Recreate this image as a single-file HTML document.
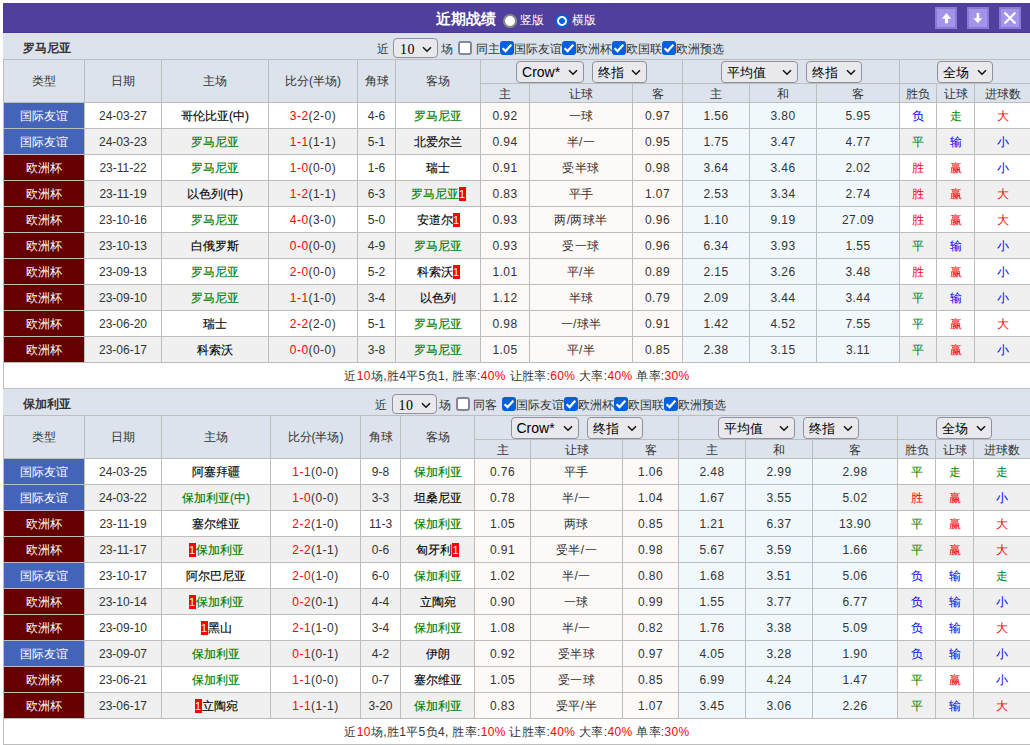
<!DOCTYPE html><html><head><meta charset="utf-8"><style>
*{box-sizing:border-box}
body{margin:0;width:1030px;height:745px;overflow:hidden;position:relative;background:#fff;font-family:"Liberation Sans",sans-serif;font-size:12px;color:#333}
.bar{position:absolute;left:3px;top:3px;width:1027px;height:30px;background:#503f9c;border-bottom:1px solid #4a399b}
.bar .title{position:absolute;left:433px;top:7px;color:#fff;font-weight:bold;font-size:15px;line-height:18px}
.rad{position:absolute;top:11px;width:14px;height:14px;border-radius:50%}
.rad.off{background:#fff;border:2px solid #8a8a8a}
.rad.on{background:radial-gradient(circle,#0060df 0,#0060df 2.6px,#fff 3.2px);border:2px solid #0060df}
.rl{position:absolute;top:9px;color:#fff;font-size:12px;line-height:16px}
.btn{position:absolute;top:4px;width:22px;height:22px;background:#a493e8;box-shadow:inset 0 0 0 2px #8c7bd6}
.btn svg{display:block}
.tb{position:absolute;left:3px;width:1027px;height:26px;background:#dce3ec}
.ttl{position:absolute;left:20px;top:8px;font-size:12px;line-height:14px;color:#333}
.ti{position:absolute;top:8px;line-height:16px;white-space:nowrap}
.ab{position:absolute;line-height:0}
.sel{display:inline-block;position:relative;vertical-align:top;height:22px;border:1px solid #8f8f9d;border-radius:4px;background:#e9e9ed;color:#000;font-size:13px;line-height:21px;padding-left:5px;text-align:left}
.lat{font-size:14px}
.mono{font-family:"Liberation Serif",serif;font-size:14px;margin-left:1px;letter-spacing:.5px;position:relative;top:1.5px}
.sel .chev{position:absolute;right:5px;top:7px}
.s10{height:20px;line-height:18px}
.cb{display:inline-block;vertical-align:top;width:14px;height:14px;border:2px solid #86869a;border-radius:3px;background:#fff}
.cb.on{background:#0060df;border:none;border-radius:3px}
.cb svg{display:block}
.t{position:absolute;left:3px;border-collapse:collapse;table-layout:fixed;width:1027px}
.t td,.t th{border:1px solid #bdbdbd;padding:0;text-align:center;white-space:nowrap;overflow:hidden;font-weight:normal}
.t th{background:#dce3ec;color:#333}
.h1 th{height:24px}
.h1 th.hs{vertical-align:top;padding-top:1px}
.h2 th{height:19px;padding-top:3px;line-height:14px;vertical-align:top}
.hs .sel{margin:0 4px}
.t td{height:26px;background:#fff;padding-top:1px}
.t tr.alt td{background:#f0f0f0}
.t tr td.od{background:#fdf9f6;letter-spacing:.4px}
.t tr td.av{background:#f1f8fb;letter-spacing:.4px}
.t tr td.ty1{background:#4464b9;color:#fff}
.t tr td.ty2{background:#660000;color:#fff}
.tg{color:#008000;-webkit-text-stroke:.15px #008000}
.tk{color:#000;-webkit-text-stroke:.12px #000}
.sr{color:#f00}
.t td.sc{letter-spacing:.45px}
.t td.xr{color:#f00}.t td.xg{color:#008000}.t td.xb{color:#00f}
.rc{display:inline-block;font-style:normal;background:#f00;color:#fff;width:7px;height:14px;line-height:14px;font-size:11px;vertical-align:middle}
.sum td{background:#fff;letter-spacing:.35px}
.red{color:#f00}
</style></head><body><div class="bar"><span class="title">近期战绩</span><span class="rad off" style="left:500px"></span><span class="rl" style="left:517px">竖版</span><span class="rad on" style="left:551.5px"></span><span class="rl" style="left:569px">横版</span><span class="btn" style="left:932px"><svg width="22" height="22" viewBox="0 0 22 22"><path d="M6.8 11.8L11.5 6L16.2 11.8H13.1V16.2H9.9V11.8Z" fill="#fff"/></svg></span><span class="btn" style="left:964px"><svg width="22" height="22" viewBox="0 0 22 22"><path d="M9.6 6H12.2V11.3H15.2L10.9 16.2L6.2 11.3H9.6Z" fill="#fff"/></svg></span><span class="btn" style="left:996px"><svg width="22" height="22" viewBox="0 0 22 22"><path d="M5.5 5.5L16.4 16.6M16.4 5.5L5.5 16.6" stroke="#fff" stroke-width="2.1"/></svg></span></div><div class="tb" style="top:33px"><b class="ttl">罗马尼亚</b><span class="ti" style="left:373.5px">近</span><span class="ab" style="left:390px;top:5px"><span class="sel s10" style="width:45px"><span class="mono">10</span><svg class="chev" width="10" height="7" viewBox="0 0 10 7"><path d="M1 1.2L5 5.2L9 1.2" fill="none" stroke="#111" stroke-width="1.5"/></svg></span></span><span class="ti" style="left:438px">场</span><span class="ab" style="left:455px;top:8px"><span class="cb"></span></span><span class="ti" style="left:472.5px">同主</span><span class="ab" style="left:497px;top:8px"><span class="cb on"><svg width="14" height="14" viewBox="0 0 14 14"><path d="M2.6 7.2L5.6 10.1L11.3 3.8" fill="none" stroke="#fff" stroke-width="2.2"/></svg></span></span><span class="ti" style="left:510.5px">国际友谊</span><span class="ab" style="left:559px;top:8px"><span class="cb on"><svg width="14" height="14" viewBox="0 0 14 14"><path d="M2.6 7.2L5.6 10.1L11.3 3.8" fill="none" stroke="#fff" stroke-width="2.2"/></svg></span></span><span class="ti" style="left:573px">欧洲杯</span><span class="ab" style="left:609px;top:8px"><span class="cb on"><svg width="14" height="14" viewBox="0 0 14 14"><path d="M2.6 7.2L5.6 10.1L11.3 3.8" fill="none" stroke="#fff" stroke-width="2.2"/></svg></span></span><span class="ti" style="left:623px">欧国联</span><span class="ab" style="left:659px;top:8px"><span class="cb on"><svg width="14" height="14" viewBox="0 0 14 14"><path d="M2.6 7.2L5.6 10.1L11.3 3.8" fill="none" stroke="#fff" stroke-width="2.2"/></svg></span></span><span class="ti" style="left:673px">欧洲预选</span></div><table class="t" style="top:59px"><col style="width:81px"><col style="width:77px"><col style="width:107px"><col style="width:89px"><col style="width:38px"><col style="width:85px"><col style="width:49px"><col style="width:103px"><col style="width:50px"><col style="width:67px"><col style="width:67px"><col style="width:83px"><col style="width:37px"><col style="width:38px"><col style="width:56px"><tr class="h1"><th rowspan="2">类型</th><th rowspan="2">日期</th><th rowspan="2">主场</th><th rowspan="2">比分(半场)</th><th rowspan="2">角球</th><th rowspan="2">客场</th><th colspan="3" class="hs"><span class="sel " style="width:68px"><span class="lat">Crow*</span><svg class="chev" width="10" height="7" viewBox="0 0 10 7"><path d="M1 1.2L5 5.2L9 1.2" fill="none" stroke="#111" stroke-width="1.5"/></svg></span><span class="sel " style="width:55px">终指<svg class="chev" width="10" height="7" viewBox="0 0 10 7"><path d="M1 1.2L5 5.2L9 1.2" fill="none" stroke="#111" stroke-width="1.5"/></svg></span></th><th colspan="3" class="hs"><span class="sel " style="width:77px">平均值<svg class="chev" width="10" height="7" viewBox="0 0 10 7"><path d="M1 1.2L5 5.2L9 1.2" fill="none" stroke="#111" stroke-width="1.5"/></svg></span><span class="sel " style="width:56px">终指<svg class="chev" width="10" height="7" viewBox="0 0 10 7"><path d="M1 1.2L5 5.2L9 1.2" fill="none" stroke="#111" stroke-width="1.5"/></svg></span></th><th colspan="3" class="hs"><span class="sel " style="width:56px">全场<svg class="chev" width="10" height="7" viewBox="0 0 10 7"><path d="M1 1.2L5 5.2L9 1.2" fill="none" stroke="#111" stroke-width="1.5"/></svg></span></th></tr><tr class="h2"><th>主</th><th>让球</th><th>客</th><th>主</th><th>和</th><th>客</th><th>胜负</th><th>让球</th><th>进球数</th></tr><tr><td class="ty1">国际友谊</td><td>24-03-27</td><td><span class="tk">哥伦比亚(中)</span></td><td class="sc"><span class="sr">3-2</span>(2-0)</td><td>4-6</td><td><span class="tg">罗马尼亚</span></td><td class="od">0.92</td><td class="od">一球</td><td class="od">0.97</td><td class="av">1.56</td><td class="av">3.80</td><td class="av">5.95</td><td class="xb">负</td><td class="xg">走</td><td class="xr">大</td></tr><tr class="alt"><td class="ty1">国际友谊</td><td>24-03-23</td><td><span class="tg">罗马尼亚</span></td><td class="sc"><span class="sr">1-1</span>(1-1)</td><td>5-1</td><td><span class="tk">北爱尔兰</span></td><td class="od">0.94</td><td class="od">半/一</td><td class="od">0.95</td><td class="av">1.75</td><td class="av">3.47</td><td class="av">4.77</td><td class="xg">平</td><td class="xb">输</td><td class="xb">小</td></tr><tr><td class="ty2">欧洲杯</td><td>23-11-22</td><td><span class="tg">罗马尼亚</span></td><td class="sc"><span class="sr">1-0</span>(0-0)</td><td>1-6</td><td><span class="tk">瑞士</span></td><td class="od">0.91</td><td class="od">受半球</td><td class="od">0.98</td><td class="av">3.64</td><td class="av">3.46</td><td class="av">2.02</td><td class="xr">胜</td><td class="xr">赢</td><td class="xb">小</td></tr><tr class="alt"><td class="ty2">欧洲杯</td><td>23-11-19</td><td><span class="tk">以色列(中)</span></td><td class="sc"><span class="sr">1-2</span>(1-1)</td><td>6-3</td><td><span class="tg">罗马尼亚</span><i class="rc">1</i></td><td class="od">0.83</td><td class="od">平手</td><td class="od">1.07</td><td class="av">2.53</td><td class="av">3.34</td><td class="av">2.74</td><td class="xr">胜</td><td class="xr">赢</td><td class="xr">大</td></tr><tr><td class="ty2">欧洲杯</td><td>23-10-16</td><td><span class="tg">罗马尼亚</span></td><td class="sc"><span class="sr">4-0</span>(3-0)</td><td>5-0</td><td><span class="tk">安道尔</span><i class="rc">1</i></td><td class="od">0.93</td><td class="od">两/两球半</td><td class="od">0.96</td><td class="av">1.10</td><td class="av">9.19</td><td class="av">27.09</td><td class="xr">胜</td><td class="xr">赢</td><td class="xr">大</td></tr><tr class="alt"><td class="ty2">欧洲杯</td><td>23-10-13</td><td><span class="tk">白俄罗斯</span></td><td class="sc"><span class="sr">0-0</span>(0-0)</td><td>4-9</td><td><span class="tg">罗马尼亚</span></td><td class="od">0.93</td><td class="od">受一球</td><td class="od">0.96</td><td class="av">6.34</td><td class="av">3.93</td><td class="av">1.55</td><td class="xg">平</td><td class="xb">输</td><td class="xb">小</td></tr><tr><td class="ty2">欧洲杯</td><td>23-09-13</td><td><span class="tg">罗马尼亚</span></td><td class="sc"><span class="sr">2-0</span>(0-0)</td><td>5-2</td><td><span class="tk">科索沃</span><i class="rc">1</i></td><td class="od">1.01</td><td class="od">平/半</td><td class="od">0.89</td><td class="av">2.15</td><td class="av">3.26</td><td class="av">3.48</td><td class="xr">胜</td><td class="xr">赢</td><td class="xb">小</td></tr><tr class="alt"><td class="ty2">欧洲杯</td><td>23-09-10</td><td><span class="tg">罗马尼亚</span></td><td class="sc"><span class="sr">1-1</span>(1-0)</td><td>3-4</td><td><span class="tk">以色列</span></td><td class="od">1.12</td><td class="od">半球</td><td class="od">0.79</td><td class="av">2.09</td><td class="av">3.44</td><td class="av">3.44</td><td class="xg">平</td><td class="xb">输</td><td class="xb">小</td></tr><tr><td class="ty2">欧洲杯</td><td>23-06-20</td><td><span class="tk">瑞士</span></td><td class="sc"><span class="sr">2-2</span>(2-0)</td><td>5-1</td><td><span class="tg">罗马尼亚</span></td><td class="od">0.98</td><td class="od">一/球半</td><td class="od">0.91</td><td class="av">1.42</td><td class="av">4.52</td><td class="av">7.55</td><td class="xg">平</td><td class="xr">赢</td><td class="xr">大</td></tr><tr class="alt"><td class="ty2">欧洲杯</td><td>23-06-17</td><td><span class="tk">科索沃</span></td><td class="sc"><span class="sr">0-0</span>(0-0)</td><td>3-8</td><td><span class="tg">罗马尼亚</span></td><td class="od">1.05</td><td class="od">平/半</td><td class="od">0.85</td><td class="av">2.38</td><td class="av">3.15</td><td class="av">3.11</td><td class="xg">平</td><td class="xr">赢</td><td class="xb">小</td></tr><tr class="sum"><td colspan="15">近<span class="red">10</span>场,胜4平5负1, 胜率:<span class="red">40%</span> 让胜率:<span class="red">60%</span> 大率:<span class="red">40%</span> 单率:<span class="red">30%</span></td></tr></table><div class="tb" style="top:389px"><b class="ttl">保加利亚</b><span class="ti" style="left:372px">近</span><span class="ab" style="left:388.5px;top:5px"><span class="sel s10" style="width:45px"><span class="mono">10</span><svg class="chev" width="10" height="7" viewBox="0 0 10 7"><path d="M1 1.2L5 5.2L9 1.2" fill="none" stroke="#111" stroke-width="1.5"/></svg></span></span><span class="ti" style="left:436px">场</span><span class="ab" style="left:453px;top:8px"><span class="cb"></span></span><span class="ti" style="left:470px">同客</span><span class="ab" style="left:499px;top:8px"><span class="cb on"><svg width="14" height="14" viewBox="0 0 14 14"><path d="M2.6 7.2L5.6 10.1L11.3 3.8" fill="none" stroke="#fff" stroke-width="2.2"/></svg></span></span><span class="ti" style="left:513px">国际友谊</span><span class="ab" style="left:561px;top:8px"><span class="cb on"><svg width="14" height="14" viewBox="0 0 14 14"><path d="M2.6 7.2L5.6 10.1L11.3 3.8" fill="none" stroke="#fff" stroke-width="2.2"/></svg></span></span><span class="ti" style="left:575px">欧洲杯</span><span class="ab" style="left:611px;top:8px"><span class="cb on"><svg width="14" height="14" viewBox="0 0 14 14"><path d="M2.6 7.2L5.6 10.1L11.3 3.8" fill="none" stroke="#fff" stroke-width="2.2"/></svg></span></span><span class="ti" style="left:625px">欧国联</span><span class="ab" style="left:661px;top:8px"><span class="cb on"><svg width="14" height="14" viewBox="0 0 14 14"><path d="M2.6 7.2L5.6 10.1L11.3 3.8" fill="none" stroke="#fff" stroke-width="2.2"/></svg></span></span><span class="ti" style="left:675px">欧洲预选</span></div><table class="t" style="top:415px"><col style="width:81px"><col style="width:77px"><col style="width:109px"><col style="width:90px"><col style="width:40px"><col style="width:74px"><col style="width:56px"><col style="width:92px"><col style="width:56px"><col style="width:67px"><col style="width:67px"><col style="width:85px"><col style="width:38px"><col style="width:38px"><col style="width:57px"><tr class="h1"><th rowspan="2">类型</th><th rowspan="2">日期</th><th rowspan="2">主场</th><th rowspan="2">比分(半场)</th><th rowspan="2">角球</th><th rowspan="2">客场</th><th colspan="3" class="hs"><span class="sel " style="width:68px"><span class="lat">Crow*</span><svg class="chev" width="10" height="7" viewBox="0 0 10 7"><path d="M1 1.2L5 5.2L9 1.2" fill="none" stroke="#111" stroke-width="1.5"/></svg></span><span class="sel " style="width:56px">终指<svg class="chev" width="10" height="7" viewBox="0 0 10 7"><path d="M1 1.2L5 5.2L9 1.2" fill="none" stroke="#111" stroke-width="1.5"/></svg></span></th><th colspan="3" class="hs"><span class="sel " style="width:77px">平均值<svg class="chev" width="10" height="7" viewBox="0 0 10 7"><path d="M1 1.2L5 5.2L9 1.2" fill="none" stroke="#111" stroke-width="1.5"/></svg></span><span class="sel " style="width:56px">终指<svg class="chev" width="10" height="7" viewBox="0 0 10 7"><path d="M1 1.2L5 5.2L9 1.2" fill="none" stroke="#111" stroke-width="1.5"/></svg></span></th><th colspan="3" class="hs"><span class="sel " style="width:56px">全场<svg class="chev" width="10" height="7" viewBox="0 0 10 7"><path d="M1 1.2L5 5.2L9 1.2" fill="none" stroke="#111" stroke-width="1.5"/></svg></span></th></tr><tr class="h2"><th>主</th><th>让球</th><th>客</th><th>主</th><th>和</th><th>客</th><th>胜负</th><th>让球</th><th>进球数</th></tr><tr><td class="ty1">国际友谊</td><td>24-03-25</td><td><span class="tk">阿塞拜疆</span></td><td class="sc"><span class="sr">1-1</span>(0-0)</td><td>9-8</td><td><span class="tg">保加利亚</span></td><td class="od">0.76</td><td class="od">平手</td><td class="od">1.06</td><td class="av">2.48</td><td class="av">2.99</td><td class="av">2.98</td><td class="xg">平</td><td class="xg">走</td><td class="xg">走</td></tr><tr class="alt"><td class="ty1">国际友谊</td><td>24-03-22</td><td><span class="tg">保加利亚(中)</span></td><td class="sc"><span class="sr">1-0</span>(0-0)</td><td>3-3</td><td><span class="tk">坦桑尼亚</span></td><td class="od">0.78</td><td class="od">半/一</td><td class="od">1.04</td><td class="av">1.67</td><td class="av">3.55</td><td class="av">5.02</td><td class="xr">胜</td><td class="xr">赢</td><td class="xb">小</td></tr><tr><td class="ty2">欧洲杯</td><td>23-11-19</td><td><span class="tk">塞尔维亚</span></td><td class="sc"><span class="sr">2-2</span>(1-0)</td><td>11-3</td><td><span class="tg">保加利亚</span></td><td class="od">1.05</td><td class="od">两球</td><td class="od">0.85</td><td class="av">1.21</td><td class="av">6.37</td><td class="av">13.90</td><td class="xg">平</td><td class="xr">赢</td><td class="xr">大</td></tr><tr class="alt"><td class="ty2">欧洲杯</td><td>23-11-17</td><td><i class="rc">1</i><span class="tg">保加利亚</span></td><td class="sc"><span class="sr">2-2</span>(1-1)</td><td>0-6</td><td><span class="tk">匈牙利</span><i class="rc">1</i></td><td class="od">0.91</td><td class="od">受半/一</td><td class="od">0.98</td><td class="av">5.67</td><td class="av">3.59</td><td class="av">1.66</td><td class="xg">平</td><td class="xr">赢</td><td class="xr">大</td></tr><tr><td class="ty1">国际友谊</td><td>23-10-17</td><td><span class="tk">阿尔巴尼亚</span></td><td class="sc"><span class="sr">2-0</span>(1-0)</td><td>6-0</td><td><span class="tg">保加利亚</span></td><td class="od">1.02</td><td class="od">半/一</td><td class="od">0.80</td><td class="av">1.68</td><td class="av">3.51</td><td class="av">5.06</td><td class="xb">负</td><td class="xb">输</td><td class="xg">走</td></tr><tr class="alt"><td class="ty2">欧洲杯</td><td>23-10-14</td><td><i class="rc">1</i><span class="tg">保加利亚</span></td><td class="sc"><span class="sr">0-2</span>(0-1)</td><td>4-4</td><td><span class="tk">立陶宛</span></td><td class="od">0.90</td><td class="od">一球</td><td class="od">0.99</td><td class="av">1.55</td><td class="av">3.77</td><td class="av">6.77</td><td class="xb">负</td><td class="xb">输</td><td class="xb">小</td></tr><tr><td class="ty2">欧洲杯</td><td>23-09-10</td><td><i class="rc">1</i><span class="tk">黑山</span></td><td class="sc"><span class="sr">2-1</span>(1-0)</td><td>3-4</td><td><span class="tg">保加利亚</span></td><td class="od">1.08</td><td class="od">半/一</td><td class="od">0.82</td><td class="av">1.76</td><td class="av">3.38</td><td class="av">5.09</td><td class="xb">负</td><td class="xb">输</td><td class="xr">大</td></tr><tr class="alt"><td class="ty1">国际友谊</td><td>23-09-07</td><td><span class="tg">保加利亚</span></td><td class="sc"><span class="sr">0-1</span>(0-1)</td><td>4-2</td><td><span class="tk">伊朗</span></td><td class="od">0.92</td><td class="od">受半球</td><td class="od">0.97</td><td class="av">4.05</td><td class="av">3.28</td><td class="av">1.90</td><td class="xb">负</td><td class="xb">输</td><td class="xb">小</td></tr><tr><td class="ty2">欧洲杯</td><td>23-06-21</td><td><span class="tg">保加利亚</span></td><td class="sc"><span class="sr">1-1</span>(0-0)</td><td>0-7</td><td><span class="tk">塞尔维亚</span></td><td class="od">1.05</td><td class="od">受一球</td><td class="od">0.85</td><td class="av">6.99</td><td class="av">4.24</td><td class="av">1.47</td><td class="xg">平</td><td class="xr">赢</td><td class="xb">小</td></tr><tr class="alt"><td class="ty2">欧洲杯</td><td>23-06-17</td><td><i class="rc">1</i><span class="tk">立陶宛</span></td><td class="sc"><span class="sr">1-1</span>(1-1)</td><td>3-20</td><td><span class="tg">保加利亚</span></td><td class="od">0.83</td><td class="od">受平/半</td><td class="od">1.07</td><td class="av">3.45</td><td class="av">3.06</td><td class="av">2.26</td><td class="xg">平</td><td class="xb">输</td><td class="xr">大</td></tr><tr class="sum"><td colspan="15">近<span class="red">10</span>场,胜1平5负4, 胜率:<span class="red">10%</span> 让胜率:<span class="red">40%</span> 大率:<span class="red">40%</span> 单率:<span class="red">30%</span></td></tr></table></body></html>
